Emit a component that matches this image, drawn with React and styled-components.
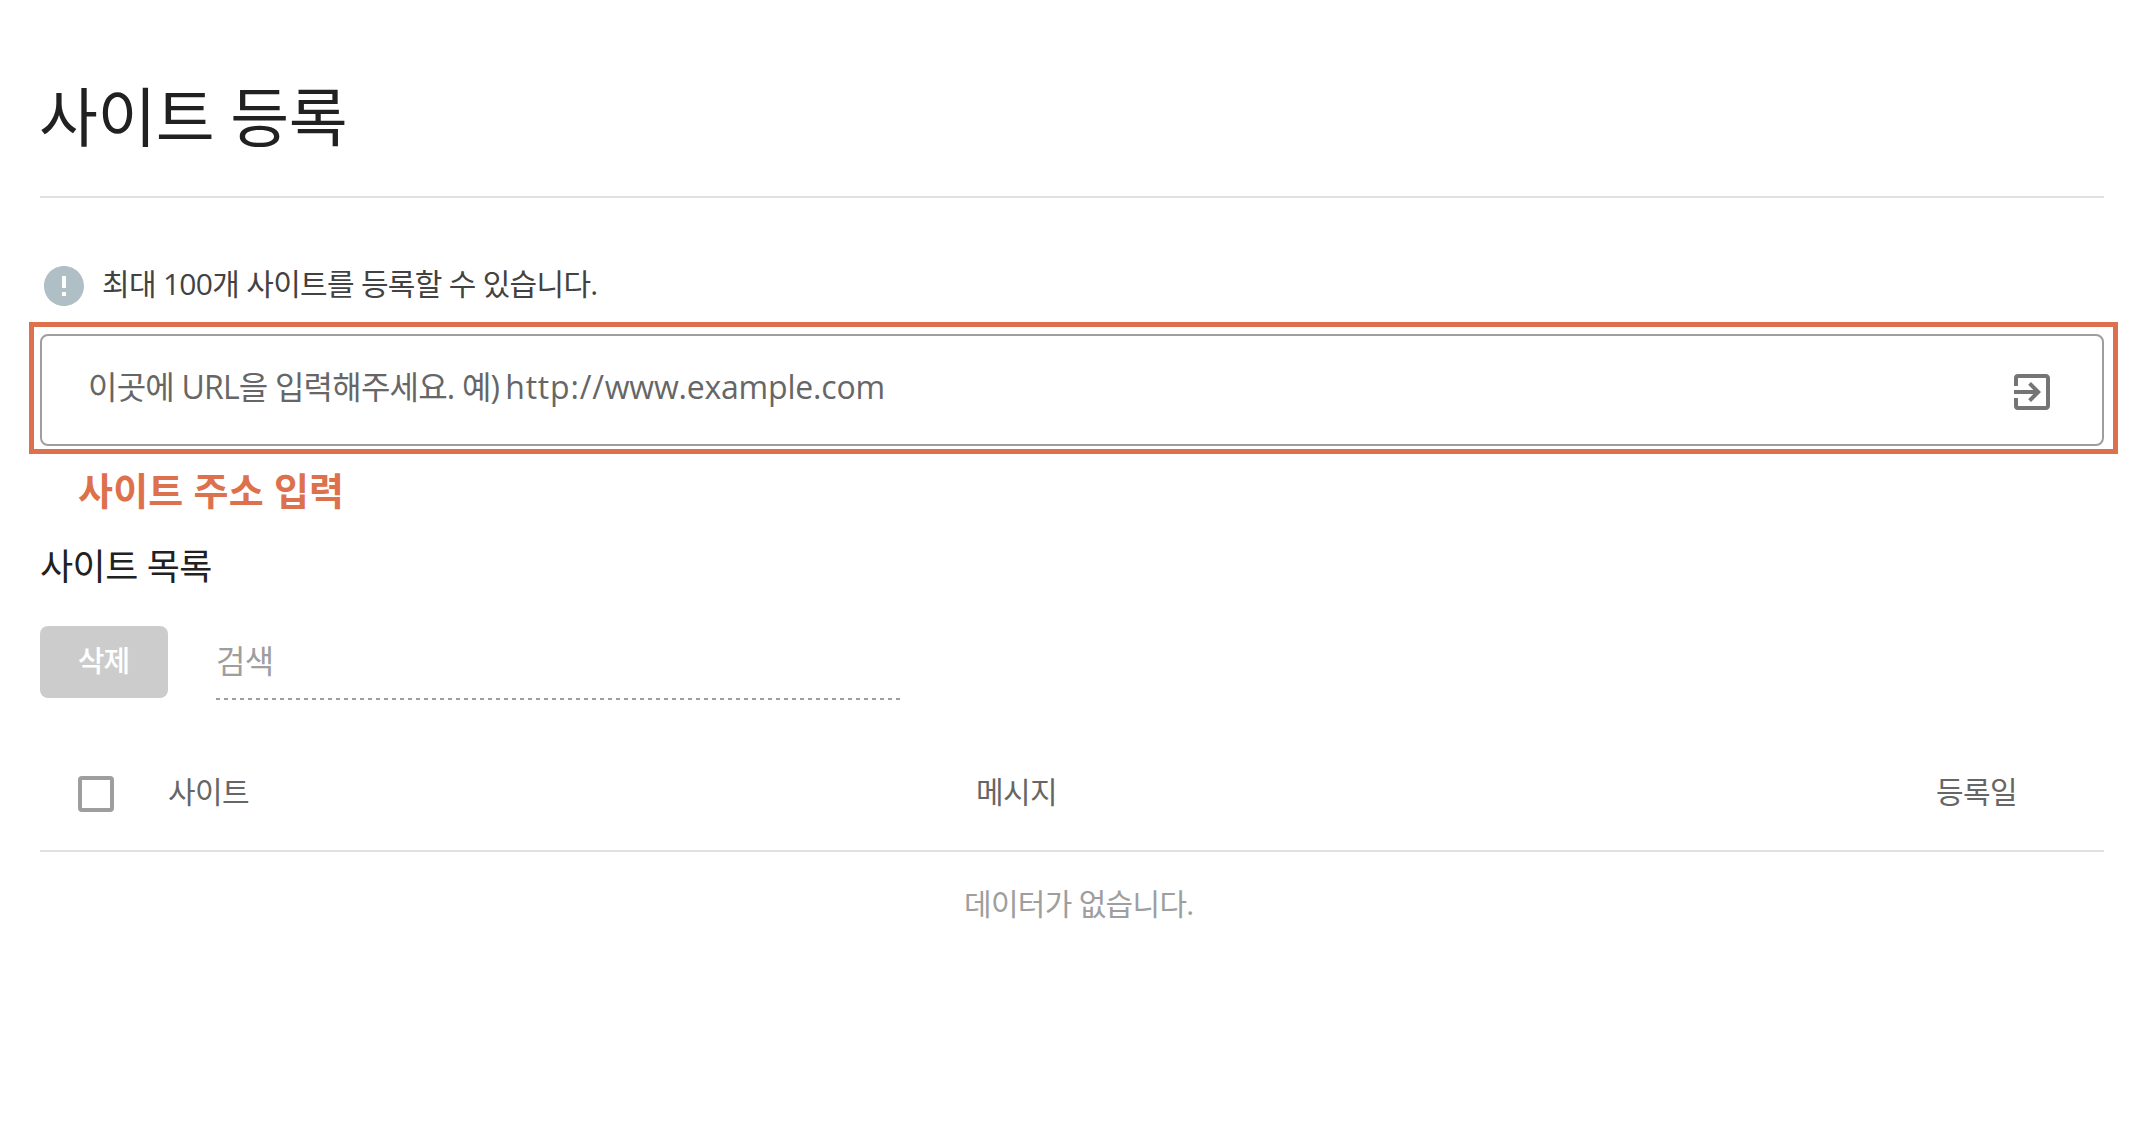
import styled, { createGlobalStyle } from "styled-components"
import { MdError, MdExitToApp } from "react-icons/md"

const GlobalStyle = createGlobalStyle`
    * {
        box-sizing: border-box;
    }
    body {
        margin: 0;
        background-color: #fff;
        font-family: "Open Sans", "Noto Sans CJK KR", sans-serif;
    }
`
const Container = styled.div`
    height: 1126px;
    padding: 0 46px 0 40px;
    overflow: hidden;
`
const Header = styled.header`
    height: 198px;
    padding-top: 69px;
    border-bottom: 2px solid #e0e0e0;
`
const Title = styled.h1`
    margin: 0 0 0 -1px;
    font-size: 64px;
    font-weight: 400;
    line-height: 96px;
    letter-spacing: -0.5px;
    color: #212121;
`
const Notice = styled.div`
    display: flex;
    align-items: center;
    height: 48px;
    margin-top: 64px;
    font-size: 48px;
    color: #b0bec5;
`
const NoticeText = styled.p`
    margin: 0 0 4px 14px;
    font-size: 30px;
    line-height: 44px;
    letter-spacing: -0.7px;
    color: #424242;
`
const Highlight = styled.div`
    margin: 12px -14px 0 -11px;
    padding: 7px 9px 3px 6px;
    border: 5px solid #de714d;
`
const UrlField = styled.div`
    display: flex;
    align-items: center;
    justify-content: space-between;
    height: 112px;
    padding: 4px 46px 0;
    border: 2px solid #9e9e9e;
    border-radius: 8px;
    font-size: 48px;
    color: #757575;
`
const Placeholder = styled.span`
    padding-bottom: 10px;
    font-size: 32px;
    line-height: 48px;
    letter-spacing: -0.8px;
    color: #666;
`
const Protocol = styled.span`
    margin-left: 6px;
    letter-spacing: 0.8px;
`
const Domain = styled.span`
    letter-spacing: -0.2px;
`
const Caption = styled.p`
    margin: 8px 0 0 38px;
    font-size: 38px;
    font-weight: 700;
    line-height: 56px;
    letter-spacing: 0.2px;
    color: #de714d;
`
const ListTitle = styled.h2`
    margin: 23px 0 0;
    font-size: 36px;
    font-weight: 400;
    line-height: 52px;
    letter-spacing: -0.5px;
    color: #212121;
`
const Toolbar = styled.div`
    display: flex;
    height: 74px;
    margin-top: 33px;
`
const DeleteButton = styled.button`
    width: 128px;
    height: 72px;
    padding: 0 1px 6px 0;
    border: none;
    border-radius: 8px;
    background-color: #ccc;
    font-family: inherit;
    font-size: 29px;
    font-weight: 500;
    letter-spacing: -1px;
    color: #fff;
`
const Search = styled.div`
    width: 684px;
    height: 74px;
    margin-left: 48px;
    padding-top: 11px;
    background: repeating-linear-gradient(90deg, #9e9e9e 0 4px, transparent 4px 8px) bottom / 100% 2px no-repeat;
    font-size: 32px;
    line-height: 48px;
    letter-spacing: -0.8px;
    color: #9e9e9e;
`
const TableHead = styled.div`
    display: grid;
    grid-template-columns: 90px 808px 1fr auto;
    align-items: center;
    height: 116px;
    margin-top: 36px;
    padding: 2px 87px 0 38px;
    border-bottom: 2px solid #e0e0e0;
`
const Checkbox = styled.div`
    width: 36px;
    height: 36px;
    border: 4px solid #9e9e9e;
    border-radius: 4px;
`
const Column = styled.span`
    padding-bottom: 4px;
    font-size: 30px;
    line-height: 44px;
    letter-spacing: -0.6px;
    color: #666;
`
const Empty = styled.p`
    margin: 30px 0 0 924px;
    font-size: 30px;
    line-height: 44px;
    letter-spacing: -0.7px;
    color: #9e9e9e;
`

const App = () => {
  return (
    <Container>
        <GlobalStyle />
        <Header>
            <Title>사이트 등록</Title>
        </Header>
        <Notice>
            <MdError />
            <NoticeText>최대 100개 사이트를 등록할 수 있습니다.</NoticeText>
        </Notice>
        <Highlight>
            <UrlField>
                <Placeholder>
                    이곳에 URL을 입력해주세요. 예)<Protocol>http://</Protocol><Domain>www.example.com</Domain>
                </Placeholder>
                <MdExitToApp />
            </UrlField>
        </Highlight>
        <Caption>사이트 주소 입력</Caption>
        <ListTitle>사이트 목록</ListTitle>
        <Toolbar>
            <DeleteButton>삭제</DeleteButton>
            <Search>검색</Search>
        </Toolbar>
        <TableHead>
            <Checkbox />
            <Column>사이트</Column>
            <Column>메시지</Column>
            <Column>등록일</Column>
        </TableHead>
        <Empty>데이터가 없습니다.</Empty>
    </Container>
  )
}

export default App
